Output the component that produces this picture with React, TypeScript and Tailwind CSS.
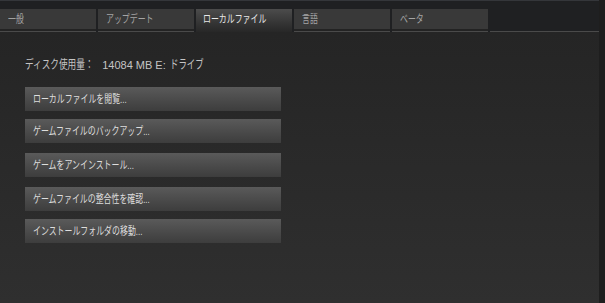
import React from 'react';

const tabs = ['一般', 'アップデート', 'ローカルファイル', '言語', 'ベータ'];
const ACTIVE = 2;

const actions = [
  { label: 'ローカルファイルを閲覧...', mt: 'mt-0' },
  { label: 'ゲームファイルのバックアップ...', mt: 'mt-[8px]' },
  { label: 'ゲームをアンインストール...', mt: 'mt-[10px]' },
  { label: 'ゲームファイルの整合性を確認...', mt: 'mt-[10px]' },
  { label: 'インストールフォルダの移動...', mt: 'mt-[8px]' },
];

const font = "font-['Liberation_Sans','Noto_Sans_CJK_JP',sans-serif]";

// the original UI font is a narrow bitmap gothic; squeeze Noto to the same width
function Narrow({ children }: { children: React.ReactNode }) {
  return <span className="inline-block origin-left scale-x-[0.72] whitespace-nowrap">{children}</span>;
}

export default function App() {
  return (
    <div className={`flex h-[303px] w-[605px] overflow-hidden bg-[#1f2022] ${font}`}>
      <div className="flex w-[599px] flex-col">
        {/* Tab strip */}
        <div className="flex h-[32px] items-end gap-[2px] border-t border-[#34363a] bg-[#1f2022]">
          {tabs.map((t, i) =>
            i === ACTIVE ? (
              <div
                key={t}
                className="flex h-[23px] w-[96px] items-start bg-gradient-to-b from-[#4c4c4c] to-[#272727] pl-[7px] pt-[4px] text-[11px] leading-[13px] text-[#e8e8e8]"
              >
                <Narrow>{t}</Narrow>
              </div>
            ) : (
              <div key={t} className="flex h-[23px] w-[96px] flex-col">
                <div className="flex h-[20px] items-center bg-[#393939] pl-[8px] text-[11px] leading-[13px] text-[#a4a4a4]">
                  <Narrow>{t}</Narrow>
                </div>
                <div className="h-[2px] bg-[#232323]" />
                <div className="h-[1px] bg-[#4a4a4a]" />
              </div>
            )
          )}
          <div className="flex h-[23px] flex-1 flex-col justify-end">
            <div className="h-[1px] bg-[#4a4a4a]" />
          </div>
        </div>

        {/* Content */}
        <div className="flex flex-1 flex-col bg-gradient-to-b from-[#252525] to-[#2f2f2f] pl-[25px]">
          <div className="mt-[26px] flex items-baseline whitespace-nowrap text-[12px] leading-[14px] text-[#c4c4c4]">
            <span className="mr-[-28px] inline-block origin-left scale-x-[0.72]">ディスク使用量：</span>
            <span className="ml-[10px] text-[11px]">14084 MB E:</span>
            <span className="ml-[4px] inline-block origin-left scale-x-[0.7]">ドライブ</span>
          </div>
          <div className="mt-[15px] flex flex-col">
            {actions.map((a) => (
              <button
                key={a.label}
                className={`${a.mt} flex h-[24px] w-[256px] items-center overflow-hidden bg-gradient-to-b from-[#5a5a5a] to-[#3d3d3d] pl-[8px] text-[11px] leading-[13px] text-[#dedede]`}
              >
                <Narrow>{a.label}</Narrow>
              </button>
            ))}
          </div>
        </div>
      </div>
      <div className="flex-1 bg-[#1e1e1e]" />
    </div>
  );
}
